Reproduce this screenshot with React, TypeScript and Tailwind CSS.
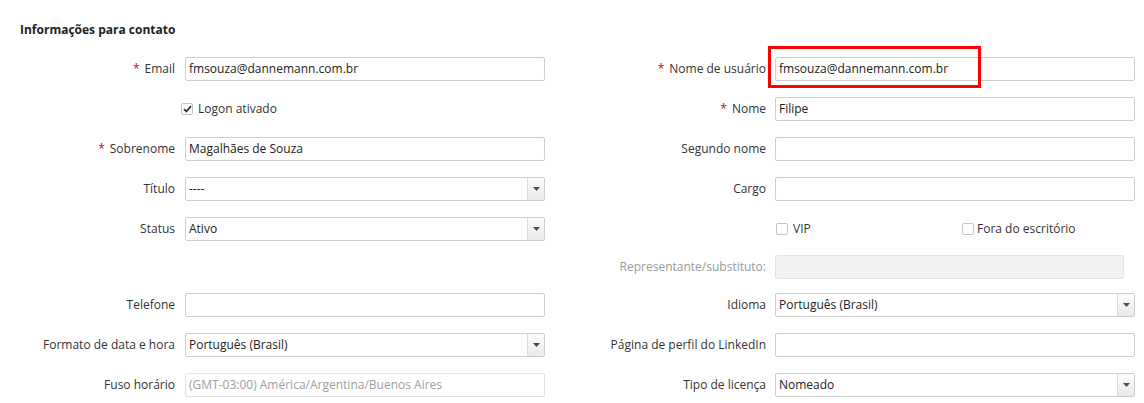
import React from "react";

const font = { fontFamily: '"Open Sans", "Noto Sans", sans-serif' };

function Label({ text, required, muted }: { text: string; required?: boolean; muted?: boolean }) {
  return (
    <span className={muted ? "text-[#9a9a9a]" : "text-[#333]"}>
      {required ? <span className="text-[#d0021b] mr-[5px]">*</span> : null}
      {text}
    </span>
  );
}

function TextBox({ value, disabled, className }: { value?: string; disabled?: boolean; className?: string }) {
  return (
    <div
      className={
        "h-[24px] border rounded-[2px] flex items-center px-[3px] text-[12px] " +
        (disabled ? "border-[#e2e2e2] text-[#a0a0a0] " : "border-[#cfcfcf] text-[#222] bg-white ") +
        (className ?? "w-[360px]")
      }
    >
      {value}
    </div>
  );
}

function Select({ value }: { value: string }) {
  return (
    <div className="h-[24px] w-[360px] border border-[#cfcfcf] rounded-[2px] flex items-stretch bg-white text-[12px] text-[#222]">
      <div className="flex-1 flex items-center px-[3px]">{value}</div>
      <div className="w-[17px] border-l border-[#dcdcdc] bg-gradient-to-b from-[#fdfdfd] to-[#e9e9e9] flex items-center justify-center">
        <svg width="7" height="4" viewBox="0 0 7 4">
          <path d="M0 0h7L3.5 4z" fill="#4a4a4a" />
        </svg>
      </div>
    </div>
  );
}

function Check({ checked }: { checked?: boolean }) {
  return (
    <span className="w-[12px] h-[12px] border border-[#c4c4c4] rounded-[2px] bg-white flex items-center justify-center shrink-0">
      {checked ? (
        <svg width="9" height="8" viewBox="0 0 9 8">
          <path d="M1 4.2l2.3 2.3L8 1.2" stroke="#333" strokeWidth="1.8" fill="none" />
        </svg>
      ) : null}
    </span>
  );
}

function Row({ children, h = "h-[40px]" }: { children: React.ReactNode; h?: string }) {
  return <div className={"flex items-center " + h}>{children}</div>;
}

function LeftField({ label, required, children }: { label?: string; required?: boolean; children?: React.ReactNode }) {
  return (
    <div className="flex items-center w-[525px] shrink-0">
      <div className="w-[155px] text-right text-[12px] shrink-0">
        {label ? <Label text={label} required={required} /> : null}
      </div>
      <div className="ml-[10px]">{children}</div>
    </div>
  );
}

function RightField({ label, required, muted, children }: { label?: string; required?: boolean; muted?: boolean; children?: React.ReactNode }) {
  return (
    <div className="flex items-center">
      <div className="w-[221px] text-right text-[12px] shrink-0">
        {label ? <Label text={label} required={required} muted={muted} /> : null}
      </div>
      <div className="ml-[9px]">{children}</div>
    </div>
  );
}

export default function App() {
  return (
    <div className="w-[1144px] h-[403px] bg-white overflow-hidden pl-[20px] pt-[22px]" style={font}>
      <div className="h-[16px] text-[12px] font-bold text-[#222] leading-[16px]">Informações para contato</div>
      <div className="mt-[11px]">
        <Row>
          <LeftField label="Email" required>
            <TextBox value="fmsouza@dannemann.com.br" />
          </LeftField>
          <RightField label="Nome de usuário" required>
            <div className="relative">
              <TextBox value="fmsouza@dannemann.com.br" />
              <div className="absolute left-[-7px] top-[-11px] w-[213px] h-[42px] border-[3px] border-[#ff0000]" />
            </div>
          </RightField>
        </Row>
        <Row>
          <LeftField>
            <div className="flex items-center gap-[5px] -ml-[4px] text-[12px] text-[#333]">
              <Check checked />
              <span>Logon ativado</span>
            </div>
          </LeftField>
          <RightField label="Nome" required>
            <TextBox value="Filipe" />
          </RightField>
        </Row>
        <Row>
          <LeftField label="Sobrenome" required>
            <TextBox value="Magalhães de Souza" />
          </LeftField>
          <RightField label="Segundo nome">
            <TextBox />
          </RightField>
        </Row>
        <Row>
          <LeftField label="Título">
            <Select value="----" />
          </LeftField>
          <RightField label="Cargo">
            <TextBox />
          </RightField>
        </Row>
        <Row>
          <LeftField label="Status">
            <Select value="Ativo" />
          </LeftField>
          <RightField>
            <div className="flex items-center w-[360px] text-[12px] text-[#333]">
              <div className="flex items-center gap-[5px] w-[186px] ml-[1px]">
                <Check />
                <span>VIP</span>
              </div>
              <div className="flex items-center gap-[3px]">
                <Check />
                <span>Fora do escritório</span>
              </div>
            </div>
          </RightField>
        </Row>
        <Row h="h-[36px]">
          <LeftField />
          <RightField label="Representante/substituto:" muted>
            <div className="h-[24px] w-[349px] border border-[#e4e4e4] bg-[#f2f2f2] rounded-[2px]" />
          </RightField>
        </Row>
        <Row>
          <LeftField label="Telefone">
            <TextBox />
          </LeftField>
          <RightField label="Idioma">
            <Select value="Português (Brasil)" />
          </RightField>
        </Row>
        <Row>
          <LeftField label="Formato de data e hora">
            <Select value="Português (Brasil)" />
          </LeftField>
          <RightField label="Página de perfil do LinkedIn">
            <TextBox />
          </RightField>
        </Row>
        <Row>
          <LeftField label="Fuso horário">
            <TextBox value="(GMT-03:00) América/Argentina/Buenos Aires" disabled />
          </LeftField>
          <RightField label="Tipo de licença">
            <Select value="Nomeado" />
          </RightField>
        </Row>
      </div>
    </div>
  );
}
